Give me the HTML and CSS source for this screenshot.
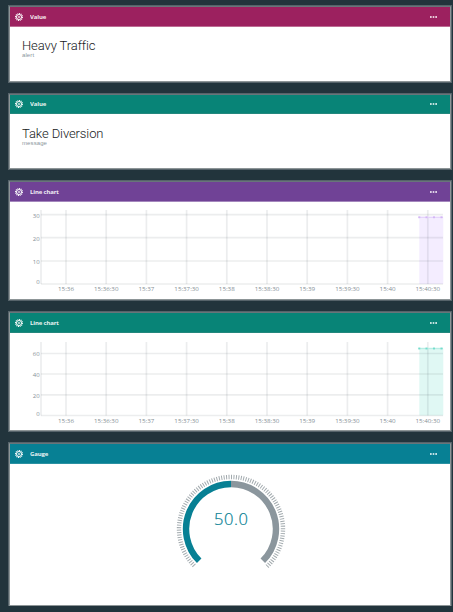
FILE: index.html
```
<!DOCTYPE html>
<html lang="en">
<head>
<meta charset="utf-8">
<title>Board</title>
<link rel="stylesheet" href="styles.css">
</head>
<body>
<svg width="0" height="0" class="defs" aria-hidden="true">
  <symbol id="gear" viewBox="0 0 8 8">
    <circle cx="4" cy="4" r="3.4" fill="none" stroke="currentColor" stroke-width="1.1" pathLength="24" stroke-dasharray="1.2 .8"/>
    <circle cx="4" cy="4" r="2.5" fill="none" stroke="currentColor" stroke-width="1"/>
    <circle cx="4" cy="4" r="1.1" fill="currentColor" opacity=".75"/>
  </symbol>
  <symbol id="dots" viewBox="0 0 7 2">
    <path d="M0 .3h1.7v1.4H0zM2.7 .3h1.6v1.4H2.7zM5.3 .3H7v1.4H5.3z" fill="currentColor"/>
  </symbol>
</svg>
<main class="board">
  <section class="card value magenta">
    <header><svg class="gear"><use href="#gear"/></svg><h2>Value</h2><svg class="dots"><use href="#dots"/></svg></header>
    <div class="reading"><p class="big">Heavy Traffic</p><p class="name">alert</p></div>
  </section>
  <section class="card value second green">
    <header><svg class="gear"><use href="#gear"/></svg><h2>Value</h2><svg class="dots"><use href="#dots"/></svg></header>
    <div class="reading"><p class="big">Take Diversion</p><p class="name">message</p></div>
  </section>
  <section class="card line purple">
    <header><svg class="gear"><use href="#gear"/></svg><h2>Line chart</h2><svg class="dots"><use href="#dots"/></svg></header>
    <svg class="chart" data-top="28" data-ticks="30:32.7,20:55.7,10:79,0:102" data-value="35.3"></svg>
  </section>
  <section class="card line lower green">
    <header><svg class="gear"><use href="#gear"/></svg><h2>Line chart</h2><svg class="dots"><use href="#dots"/></svg></header>
    <svg class="chart" data-top="29" data-ticks="60:40.5,40:61,20:81.8,0:102.5" data-value="35.5"></svg>
  </section>
  <section class="card gauge teal">
    <header><svg class="gear"><use href="#gear"/></svg><h2>Gauge</h2><svg class="dots"><use href="#dots"/></svg></header>
    <svg class="dial" viewBox="-57 -57 114 114">
      <circle class="scale" r="52" pathLength="360" transform="rotate(135)"/>
      <path class="rest" d="M0-45A45 45 0 0 1 31.8 31.8"/>
      <path class="filled" d="M-31.8 31.8A45 45 0 0 1 0-45"/>
      <text class="amount" x="0" y="-4" text-anchor="middle" textLength="34">50.0</text>
    </svg>
  </section>
</main>
<script src="charts.js"></script>
</body>
</html>
```
FILE: styles.css
```
* { box-sizing: border-box; }
body { margin: 0; background: #22343c; font-family: "Open Sans", "Liberation Sans", sans-serif; overflow: hidden; }
.defs { display: block; }
.board { display: flex; flex-direction: column; gap: 12px; width: 452px; padding: 6px 1px 0 9px; }
.card { border: 1px solid #8d9597; border-top-color: #68757a; box-shadow: 0 0 0 1px #56636a; background: #fff; }
.value { height: 76px; }
.second { height: 75px; margin-top: -.5px; }
.line { height: 119px; margin-top: .5px; }
.lower { height: 119px; margin-top: 0; }
.gauge { height: 163px; margin-top: -.5px; }
h2, p { margin: 0; }
header { display: flex; align-items: center; height: 20px; padding: 0 13.5px 0 5px; color: #fff; border-bottom: 1px solid; }
.second header { height: 19.5px; padding-bottom: .5px; }
.gauge header { height: 20.5px; padding-top: .5px; }
h2 { flex: 1; margin-left: 7px; font-size: 6px; line-height: 8px; font-weight: 700; letter-spacing: -.15px; opacity: .9; }
.gear { width: 8px; height: 8px; }
.dots { width: 7px; height: 2px; }
.magenta header { background: #9c215f; border-color: #bd6c94; }
.green header { background: #088477; border-color: #23877d; }
.purple header { background: #704296; border-color: #a487bd; }
.teal header { background: #078094; border-color: #2b91a2; }
.reading { padding: 11px 0 0 12px; }
.second .reading { padding-top: 11.5px; }
.big { font-family: Roboto, sans-serif; font-weight: 300; font-size: 13px; line-height: 15px; letter-spacing: -.1px; color: #16191b; white-space: nowrap; }
.name { font-family: "Liberation Sans", sans-serif; font-size: 6px; line-height: 5px; letter-spacing: .1px; color: #8b969d; }
.chart { display: block; width: 440px; height: 97px; }
.grid { stroke: #22343c; stroke-opacity: .085; stroke-width: 1.7; }
.chart text { font-family: "Open Sans", sans-serif; font-size: 6px; fill: #858f96; }
.area { fill: #f4edff; }
.plotline { stroke: #e5d5fb; stroke-width: 1.4; }
.point { fill: #d3b7f4; }
.green .area { fill: #e0f8f4; }
.green .plotline { stroke: #b9eee5; }
.green .point { fill: #75dccc; }
.dial { display: block; width: 114px; height: 114px; margin: 8px auto 0 164px; }
.dial circle, .dial path { fill: none; }
.scale { stroke: #a2aaae; stroke-width: 4.4; }
.rest { stroke: #8b969d; stroke-width: 6.4; }
.filled { stroke: #078094; stroke-width: 6.4; }
.amount { font-family: "Open Sans", sans-serif; font-weight: 300; font-size: 16.5px; fill: #078094; stroke: #078094; stroke-width: .2; }
```
FILE: charts.js
```
const times = ["15:36", "15:36:30", "15:37", "15:37:30", "15:38", "15:38:30", "15:39", "15:39:30", "15:40", "15:40:30"];
const left = 31, right = 433, headerHeight = 20;

document.querySelectorAll(".chart").forEach(chart => {
  const top = chart.dataset.top - headerHeight;
  const value = chart.dataset.value - headerHeight;
  const ticks = chart.dataset.ticks.split(",").map(t => t.split(":"));
  const bottom = ticks[ticks.length - 1][1] - headerHeight;
  let out = `<rect class="area" x="409.3" y="${value}" width="24" height="${bottom - value}"/>`;
  out += `<path class="grid" d="M${left} ${top}V${bottom}"/>`;
  times.forEach((time, i) => {
    const x = 56 + i * 40.2;
    const width = time.length > 5 ? 24.5 : 16;
    out += `<path class="grid" d="M${x} ${top}V${bottom}"/><text x="${x}" y="${bottom + 7}" text-anchor="middle" textLength="${width}" lengthAdjust="spacingAndGlyphs">${time}</text>`;
  });
  ticks.forEach(([label, pos]) => {
    const y = pos - headerHeight;
    out += `<path class="grid" d="M${left} ${y}H${right}"/><text x="29.7" y="${label === "0" ? y : y + 2.8}" text-anchor="end">${label}</text>`;
  });
  out += `<path class="plotline" d="M408.5 ${value}H433"/>`;
  [409.3, 416.5, 424, 431.5].forEach(x => {
    out += `<rect class="point" x="${x - 1}" y="${value - .9}" width="2" height="1.8"/>`;
  });
  chart.innerHTML = out;
});

// 101 scale marks spread over the 270 degree sweep
const dashes = [];
for (let i = 0; i < 100; i++) dashes.push(1.1, 1.6);
dashes.push(1.1, 88.9);
document.querySelector(".scale").style.strokeDasharray = dashes.join(" ");
```
